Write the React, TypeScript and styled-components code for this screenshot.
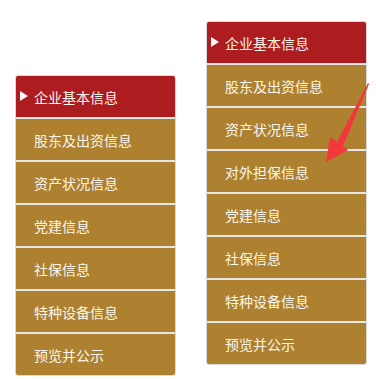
import React from "react";
import styled, { createGlobalStyle } from "styled-components";

const Global = createGlobalStyle`
  html, body { margin: 0; padding: 0; background: #ffffff; }
  body { font-family: "Noto Sans CJK SC", "Microsoft YaHei", sans-serif; }
`;

const Page = styled.div`
  position: relative;
  width: 376px;
  height: 379px;
  display: flex;
  align-items: flex-start;
  padding-left: 15px;
  gap: 30px;
  box-sizing: border-box;
  overflow: hidden;
`;

const Panel = styled.ul<{ $top: number }>`
  list-style: none;
  margin: ${(p) => p.$top}px 0 0 0;
  padding: 0;
  width: 161px;
  border: 1px solid #d9d9d9;
  border-radius: 3px;
  background: #e6e6e6;
  display: flex;
  flex-direction: column;
  gap: 2px;
  overflow: hidden;
  box-sizing: border-box;
`;

const Item = styled.li<{ $active?: boolean }>`
  height: 41px;
  display: flex;
  align-items: center;
  padding-left: ${(p) => (p.$active ? 4 : 18)}px;
  background: ${(p) => (p.$active ? "#ad1c1f" : "#ad8130")};
  color: #fbf6ec;
  font-size: 14px;
  white-space: nowrap;
`;

const Tri = styled.span`
  width: 0;
  height: 0;
  border-top: 5px solid transparent;
  border-bottom: 5px solid transparent;
  border-left: 8px solid #ffffff;
  margin-right: 6px;
  margin-top: -2px;
`;

const Arrow = styled.svg`
  position: absolute;
  left: 0;
  top: 0;
  pointer-events: none;
`;

const left = ["企业基本信息", "股东及出资信息", "资产状况信息", "党建信息", "社保信息", "特种设备信息", "预览并公示"];
const right = ["企业基本信息", "股东及出资信息", "资产状况信息", "对外担保信息", "党建信息", "社保信息", "特种设备信息", "预览并公示"];

function Menu({ items, top }: { items: string[]; top: number }) {
  return (
    <Panel $top={top}>
      {items.map((t, i) => (
        <Item key={t} $active={i === 0}>
          {i === 0 && <Tri />}
          {t}
        </Item>
      ))}
    </Panel>
  );
}

export default function App() {
  return (
    <>
      <Global />
      <Page>
        <Menu items={left} top={75} />
        <Menu items={right} top={21} />
        <Arrow width="376" height="379" viewBox="0 0 376 379">
          <polygon
            points="368,83 369,84 343,146 348,150 326,162 330,137 337,142"
            fill="#f2383a"
          />
        </Arrow>
      </Page>
    </>
  );
}
